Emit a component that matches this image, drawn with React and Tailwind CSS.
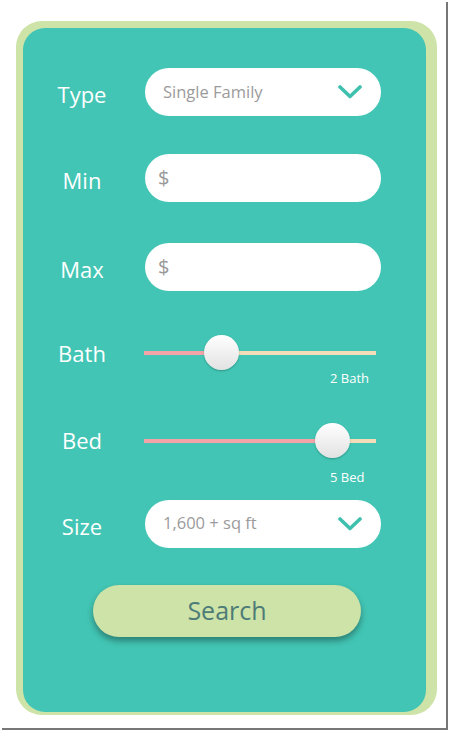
import React from "react";

const font = { fontFamily: '"Open Sans", "Noto Sans", sans-serif' };

function Chevron() {
  return (
    <svg width="24" height="14" viewBox="0 0 24 14" fill="none">
      <path d="M2 2 L12 11.5 L22 2" stroke="#3fc0ae" strokeWidth="3.6" strokeLinecap="round" strokeLinejoin="round" />
    </svg>
  );
}

function Label({ children, pad = "pt-[4px]" }) {
  return (
    <div className={`w-[118px] ${pad} text-center text-white text-[22px] leading-none`}>{children}</div>
  );
}

function Select({ value }) {
  return (
    <div className="ml-[4px] w-[236px] h-[48px] bg-white rounded-full flex items-center justify-between pl-[18px] pr-[19px]">
      <span className="text-[16.5px] text-[#9b9b9b]">{value}</span>
      <Chevron />
    </div>
  );
}

function Money() {
  return (
    <div className="ml-[4px] w-[236px] h-[48px] bg-white rounded-full flex items-center pl-[13px]">
      <span className="text-[20px] text-[#999]">$</span>
    </div>
  );
}

function Slider({ pct, caption, gap }) {
  return (
    <div className="ml-[3px] w-[232px]">
      <div className="relative h-[35px] flex items-center">
        <div className="h-[4px] w-full bg-[#f3ddb9]" />
        <div className="absolute left-0 top-[15.5px] h-[4px] bg-[#f4a4a9]" style={{ width: `${pct}px` }} />
        <div
          className="absolute top-0 w-[35px] h-[35px] rounded-full bg-gradient-to-b from-white to-[#e2e2e2] shadow-[0_1px_2px_rgba(0,0,0,0.25)]"
          style={{ left: `${pct - 17.5}px` }}
        />
      </div>
      <div className={`pl-[186px] ${gap} text-[13px] text-white leading-none`}>{caption}</div>
    </div>
  );
}

export default function App() {
  return (
    <div className="w-[450px] h-[731px] bg-white" style={font}>
      <div className="w-[446px] h-[728px] bg-white shadow-[2px_2px_0_#777] pt-[21px] pl-[16px]">
        <div className="w-[421px] h-[694px] bg-[#cde3a7] rounded-[26px] pt-[7px] pl-[7px] pr-[11px] pb-[3px]">
          <div className="w-full h-full bg-[#42c5b4] rounded-[22px] pt-[40px] flex flex-col">
            <div className="flex items-center h-[48px]">
              <Label>Type</Label>
              <Select value="Single Family" />
            </div>
            <div className="flex items-center h-[48px] mt-[38px]">
              <Label>Min</Label>
              <Money />
            </div>
            <div className="flex items-center h-[48px] mt-[41px]">
              <Label>Max</Label>
              <Money />
            </div>
            <div className="flex items-start mt-[44px]">
              <div className="h-[35px] flex items-center">
                <Label pad="pt-[1px]">Bath</Label>
              </div>
              <Slider pct={77} caption="2 Bath" gap="mt-[2px]" />
            </div>
            <div className="flex items-start mt-[38px]">
              <div className="h-[35px] flex items-center">
                <Label pad="pb-[1px]">Bed</Label>
              </div>
              <Slider pct={188} caption="5 Bed" gap="mt-[13px]" />
            </div>
            <div className="flex items-center h-[47px] mt-[16px]">
              <Label>Size</Label>
              <Select value="1,600 + sq ft" />
            </div>
            <div className="mt-[38px] ml-[70px] w-[268px] h-[52px] rounded-full bg-[#cde3a7] shadow-[0_4px_6px_rgba(0,0,0,0.35)] flex items-center justify-center">
              <span className="text-[25px] text-[#4d7b78]">Search</span>
            </div>
          </div>
        </div>
      </div>
    </div>
  );
}
